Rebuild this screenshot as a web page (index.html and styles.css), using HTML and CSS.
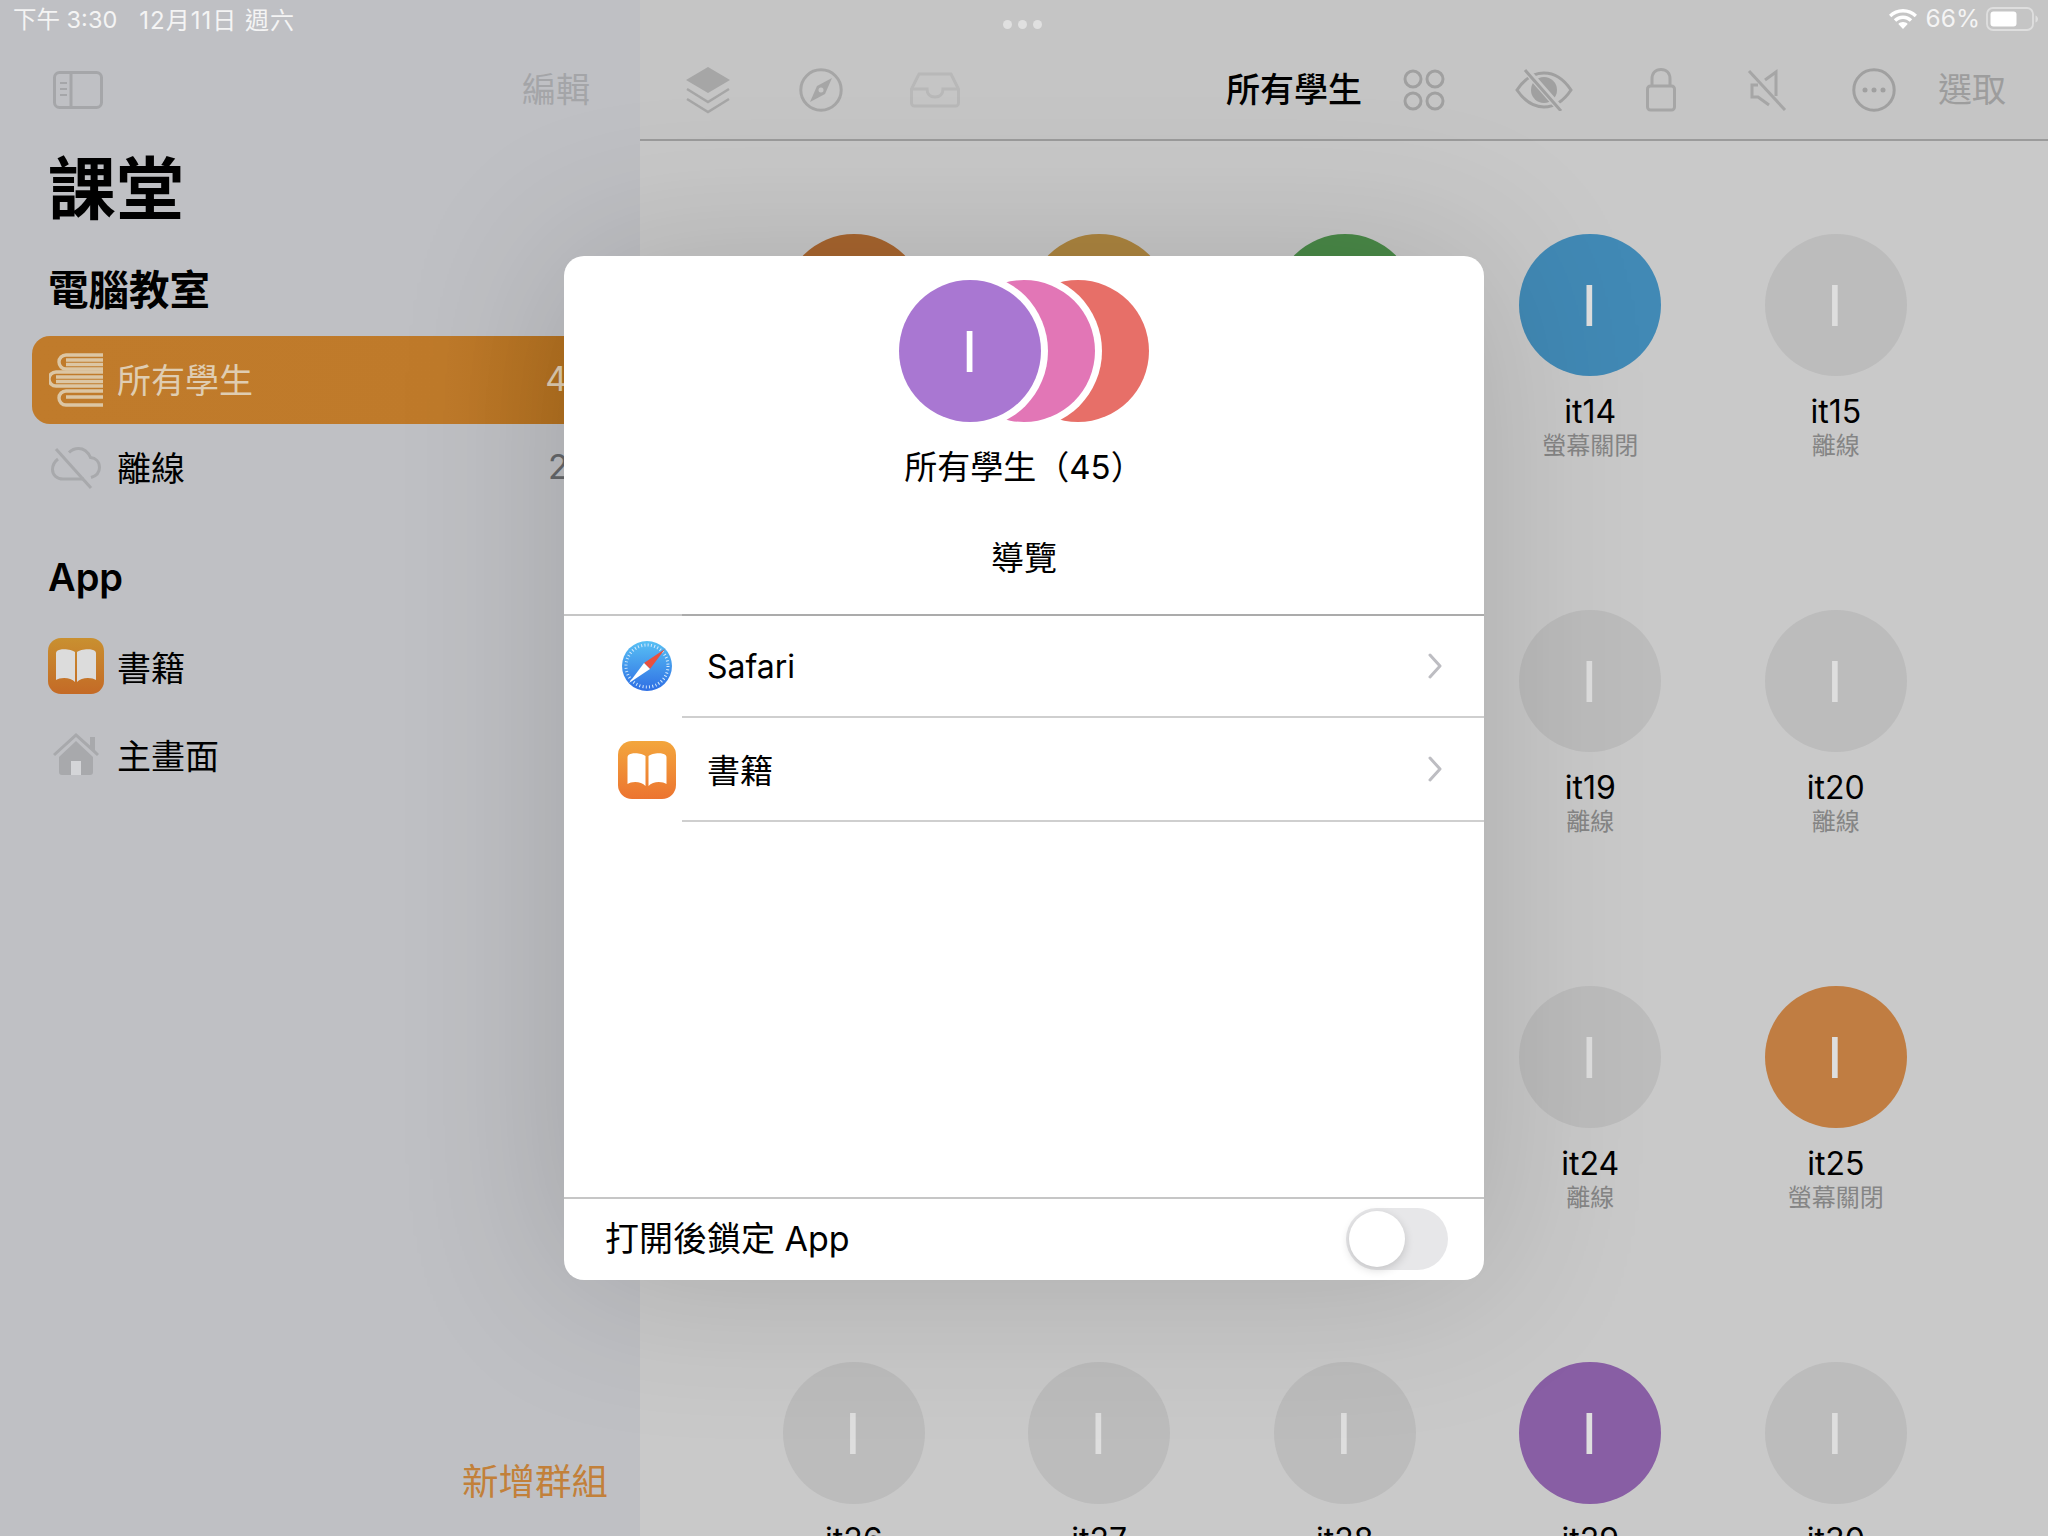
FILE: index.html
```html
<!DOCTYPE html>
<html lang="zh-Hant">
<head>
<meta charset="utf-8">
<title>課堂</title>
<link rel="stylesheet" href="styles.css">
</head>
<body>
<div class="app">
  <aside class="sidebar">
    <div class="side-bar-top">
      <svg class="ic-side" viewBox="0 0 50 38" width="50" height="38"><rect x="1.5" y="1.5" width="47" height="35" rx="5" fill="none" stroke="#a5a6a9" stroke-width="3"/><path d="M18 2v34" stroke="#a5a6a9" stroke-width="3"/><path d="M7 12h7M7 18h7M7 24h7" stroke="#a5a6a9" stroke-width="2"/></svg>
      <span class="side-edit">編輯</span>
    </div>
    <h1 class="side-title">課堂</h1>
    <h2 class="side-head">電腦教室</h2>
    <div class="side-row selected">
      <span class="row-icon">
        <svg viewBox="0 0 54 54" width="54" height="54" fill="none" stroke="#dcc6a4" stroke-width="3.4"><path d="M54 2H17a6 6 0 0 0 0 14h37M17 7h37M17 11.500h37"/><path d="M54 19H7a6 6 0 0 0 0 14h47M7 24h47M7 28.500h47" /><path d="M54 38H17a6.500 6.500 0 0 0 0 14h37M17 44h37"/></svg>
      </span>
      <span class="row-label raised">所有學生</span><span class="row-count raised">45</span>
    </div>
    <div class="side-row">
      <span class="row-icon">
        <svg viewBox="0 0 50 42" width="50" height="42" fill="none" stroke="#a8a9ac" stroke-width="3"><path d="M7 12C3 15 1.500 19 1.500 22.500 1.500 28 6 32 12 32h21M40 30.500c5-1.500 8.500-5 8.500-10 0-6-4-9.500-9-10C37 5 33 1.500 27.500 1.500c-4 0-7 1.500-9.500 4"/><path d="M5 2l35 39"/></svg>
      </span>
      <span class="row-label raised">離線</span><span class="row-count raised">27</span>
    </div>
    <h2 class="side-head app-head">App</h2>
    <div class="side-row">
      <span class="row-icon">
        <svg viewBox="0 0 56 56" width="56" height="56"><defs><linearGradient id="bk1" x1="0" y1="0" x2="0" y2="1"><stop offset="0" stop-color="#c99030"/><stop offset="1" stop-color="#c46a26"/></linearGradient></defs><rect width="56" height="56" rx="13" fill="url(#bk1)"/><path d="M27 14c-3-3-15-4-18-1-1 1-1 2-1 3v26c4-3 15-3 19 2zM29 14c3-3 15-4 18-1 1 1 1 2 1 3v26c-4-3-15-3-19 2z" fill="#dcdcdc"/></svg>
      </span>
      <span class="row-label">書籍</span>
    </div>
    <div class="side-row">
      <span class="row-icon">
        <svg viewBox="0 0 48 44" width="48" height="44"><path d="M1 22L24 1l14 12.500V5h5v13l4 4-2 2L24 5 3 24z" fill="#a8a9ac"/><path d="M7 25L24 9l17 16v15a3 3 0 0 1-3 3H10a3 3 0 0 1-3-3zM19 43h10V29H19z" fill="#a8a9ac" fill-rule="evenodd"/><rect x="19" y="29" width="10" height="14" fill="#d4d5d8"/></svg>
      </span>
      <span class="row-label">主畫面</span>
    </div>
    <div class="side-foot">新增群組</div>
  </aside>

  <main class="main">
    <header class="toolbar">
      <svg class="t-a" viewBox="0 0 44 47" width="44" height="47" fill="none" stroke="#a6a6a6" stroke-width="2.500"><path d="M22 0L44 13 22 26 0 13z" fill="#a6a6a6" stroke="none"/><path d="M1 22l21 13 21-13M1 32l21 13 21-13"/></svg>
      <svg class="t-b" viewBox="0 0 44 44" width="44" height="44"><circle cx="22" cy="22" r="20.200" fill="none" stroke="#a6a6a6" stroke-width="3"/><path d="M33 10L26 26 11 34l7-16z" fill="#a6a6a6"/><circle cx="22" cy="22" r="2.500" fill="#c6c6c6"/></svg>
      <svg class="t-c" viewBox="0 0 50 36" width="50" height="36" fill="none" stroke="#b8b8b8" stroke-width="3"><path d="M9 2h32l7.500 15v14a3 3 0 0 1-3 3h-41a3 3 0 0 1-3-3V17z"/><path d="M2 17h15c0 5 3 8 8 8s8-3 8-8h15"/></svg>
      <span class="tool-title">所有學生</span>
      <svg class="t-d" viewBox="0 0 42 42" width="42" height="42" fill="none" stroke="#a0a0a0" stroke-width="3"><circle cx="10" cy="10" r="8"/><circle cx="32" cy="10" r="8"/><circle cx="10" cy="32" r="8"/><circle cx="32" cy="32" r="8"/></svg>
      <svg class="t-e" viewBox="0 0 58 42" width="58" height="42" fill="none" stroke="#a0a0a0" stroke-width="3"><path d="M2 21C10 9 19 4 29 4s19 5 27 17C48 33 39 38 29 38S10 33 2 21z"/><circle cx="29" cy="21" r="13" fill="#a0a0a0" stroke="none"/><path d="M11 1l36 41" stroke="#c6c6c6" stroke-width="7"/><path d="M10 1l36 41"/></svg>
      <svg class="t-f" viewBox="0 0 30 44" width="30" height="44" fill="none" stroke="#a6a6a6" stroke-width="3"><rect x="1.500" y="18" width="27" height="24" rx="3"/><path d="M6 18V11C6 5 9.500 1.500 15 1.500S24 5 24 11v7"/></svg>
      <svg class="t-g" viewBox="0 0 40 42" width="40" height="42" fill="none" stroke="#a6a6a6" stroke-width="3"><path d="M2 2l36 39"/><path d="M29 27V3L18 11M11 16H5v12h6l11 8" /></svg>
      <svg class="t-h" viewBox="0 0 44 44" width="44" height="44"><circle cx="22" cy="22" r="20.200" fill="none" stroke="#a0a0a0" stroke-width="3"/><circle cx="13" cy="22" r="2.500" fill="#a0a0a0"/><circle cx="22" cy="22" r="2.500" fill="#a0a0a0"/><circle cx="31" cy="22" r="2.500" fill="#a0a0a0"/></svg>
      <span class="tool-select">選取</span>
    </header>
    <section class="grid">
      <div class="student"><div class="avatar c-rust">I</div><div class="name">it11</div><div class="status">離線</div></div>
      <div class="student"><div class="avatar c-gold">I</div><div class="name">it12</div><div class="status">離線</div></div>
      <div class="student"><div class="avatar c-green">I</div><div class="name">it13</div><div class="status">離線</div></div>
      <div class="student"><div class="avatar c-blue">I</div><div class="name">it14</div><div class="status">螢幕關閉</div></div>
      <div class="student"><div class="avatar c-grey">I</div><div class="name">it15</div><div class="status">離線</div></div>
      <div class="student"><div class="avatar c-grey">I</div><div class="name">it16</div><div class="status">離線</div></div>
      <div class="student"><div class="avatar c-grey">I</div><div class="name">it17</div><div class="status">離線</div></div>
      <div class="student"><div class="avatar c-grey">I</div><div class="name">it18</div><div class="status">離線</div></div>
      <div class="student"><div class="avatar c-grey">I</div><div class="name">it19</div><div class="status">離線</div></div>
      <div class="student"><div class="avatar c-grey">I</div><div class="name">it20</div><div class="status">離線</div></div>
      <div class="student"><div class="avatar c-grey">I</div><div class="name">it21</div><div class="status">離線</div></div>
      <div class="student"><div class="avatar c-grey">I</div><div class="name">it22</div><div class="status">離線</div></div>
      <div class="student"><div class="avatar c-grey">I</div><div class="name">it23</div><div class="status">離線</div></div>
      <div class="student"><div class="avatar c-grey">I</div><div class="name">it24</div><div class="status">離線</div></div>
      <div class="student"><div class="avatar c-orange">I</div><div class="name">it25</div><div class="status">螢幕關閉</div></div>
      <div class="student"><div class="avatar c-grey">I</div><div class="name">it26</div><div class="status">離線</div></div>
      <div class="student"><div class="avatar c-grey">I</div><div class="name">it27</div><div class="status">離線</div></div>
      <div class="student"><div class="avatar c-grey">I</div><div class="name">it28</div><div class="status">離線</div></div>
      <div class="student"><div class="avatar c-purple">I</div><div class="name">it29</div><div class="status">離線</div></div>
      <div class="student"><div class="avatar c-grey">I</div><div class="name">it30</div><div class="status">離線</div></div>
    </section>
  </main>

  <div class="statusbar">
    <span class="st-time">下午 3:30</span><span class="st-date">12月11日 週六</span>
    <span class="st-dots"><i></i><i></i><i></i></span>
    <svg class="st-wifi" viewBox="0 0 28 20" width="28" height="20"><path d="M14 0C8.500 0 3.700 2.200 0 5.700l2.300 2.500C5.300 5.300 9.400 3.500 14 3.500s8.700 1.800 11.700 4.700L28 5.700C24.300 2.200 19.500 0 14 0z" fill="#fff"/><path d="M14 6.500c-3.600 0-6.800 1.400-9.200 3.700l2.400 2.500c1.800-1.700 4.200-2.800 6.800-2.800s5 1.100 6.800 2.800l2.400-2.500C20.800 7.900 17.600 6.500 14 6.500z" fill="#fff"/><path d="M14 13c-1.900 0-3.500.7-4.700 1.900L14 20l4.700-5.100C17.500 13.700 15.900 13 14 13z" fill="#fff"/></svg>
    <span class="st-batt">66%</span>
    <svg class="st-cell" viewBox="0 0 52 24" width="52" height="24"><rect x="1" y="1" width="46" height="22" rx="6" fill="none" stroke="#dedede" stroke-width="1.800"/><rect x="4.500" y="4.500" width="26" height="15" rx="3" fill="#fff"/><path d="M49.500 8.500c1.500.5 2.500 2 2.500 3.500s-1 3-2.500 3.500z" fill="#dedede"/></svg>
  </div>

  <div class="modal">
    <div class="modal-head">
      <div class="stack">
        <div class="disc d-purple">I</div>
        <div class="disc d-pink"></div>
        <div class="disc d-red"></div>
      </div>
      <div class="modal-title">所有學生（45）</div>
      <div class="modal-sub">導覽</div>
    </div>
    <div class="app-list">
      <div class="app-row first">
        <span class="app-slot">
          <svg viewBox="0 0 50 50" width="50" height="50"><defs><linearGradient id="saf" x1="0" y1="0" x2="0" y2="1"><stop offset="0" stop-color="#58c0f4"/><stop offset="1" stop-color="#2f6fe4"/></linearGradient></defs><circle cx="25" cy="25" r="25" fill="url(#saf)"/><circle cx="25" cy="25" r="21" fill="none" stroke="#d5eafc" stroke-width="3" stroke-dasharray="1 2.300"/><path d="M43 8L28 28 22 22z" fill="#e8503f"/><path d="M7 42L22 22 28 28z" fill="#fff"/></svg>
        </span>
        <span class="app-body"><span class="app-name">Safari</span>
          <svg class="chev" viewBox="0 0 14 26" width="14" height="26" fill="none" stroke="#bdbdc2" stroke-width="3" stroke-linecap="round" stroke-linejoin="round"><path d="M2 2l10 11L2 24"/></svg>
        </span>
      </div>
      <div class="app-row second">
        <span class="app-slot">
          <svg viewBox="0 0 58 58" width="58" height="58"><defs><linearGradient id="bk2" x1="0" y1="0" x2="0" y2="1"><stop offset="0" stop-color="#f3a63c"/><stop offset="1" stop-color="#ec7430"/></linearGradient></defs><rect width="58" height="58" rx="14" fill="url(#bk2)"/><path d="M27.500 15c-3-3-14-4-17-1-1 1-1 2-1 3v26c4-3 14-3 18 2zM30.500 15c3-3 14-4 17-1 1 1 1 2 1 3v26c-4-3-14-3-18 2z" fill="#fff"/></svg>
        </span>
        <span class="app-body"><span class="app-name">書籍</span>
          <svg class="chev" viewBox="0 0 14 26" width="14" height="26" fill="none" stroke="#bdbdc2" stroke-width="3" stroke-linecap="round" stroke-linejoin="round"><path d="M2 2l10 11L2 24"/></svg>
        </span>
      </div>
    </div>
    <div class="modal-foot">
      <span class="foot-label">打開後鎖定 App</span>
      <span class="toggle"><span class="knob"></span></span>
    </div>
  </div>
</div>
</body>
</html>
```

FILE: styles.css
```css
* { box-sizing: border-box; }
html, body { margin: 0; padding: 0; }
body {
  width: 2048px;
  height: 1536px;
  overflow: hidden;
  font-family: Inter, "Noto Sans CJK TC", sans-serif;
  color: #000;
}
.app {
  position: relative;
  display: flex;
  width: 2048px;
  height: 1536px;
  overflow: hidden;
}

/* sidebar */
.sidebar {
  position: relative;
  display: flex;
  flex-direction: column;
  width: 640px;
  height: 1536px;
  background: #bfc0c4;
  flex: none;
}
.side-bar-top {
  display: flex;
  align-items: center;
  justify-content: space-between;
  height: 38px;
  margin-top: 71px;
  padding: 0 50px 0 53px;
}
.side-edit { font-size: 34px; line-height: 38px; color: #a4a5a8; }
.side-title {
  margin: 32px 0 0 48px;
  font-size: 68px;
  line-height: 96px;
  font-weight: 700;
}
.side-head {
  margin: 24px 0 0 48px;
  font-size: 40.500px;
  line-height: 60px;
  font-weight: 700;
}
.side-row {
  display: flex;
  align-items: center;
  flex: none;
  width: 576px;
  height: 88px;
  margin-left: 32px;
  padding-right: 20px;
  border-radius: 18px;
  font-size: 34px;
}
.side-head + .side-row { margin-top: 15px; }
.side-row.selected {
  background: linear-gradient(to right, #c07b2b 0%, #bf7a2a 72%, #b2701f 94%);
  color: #dfcdb2;
}
.row-icon {
  display: flex;
  align-items: center;
  justify-content: center;
  width: 56px;
  margin: 0 13px 0 16px;
}
.row-label { flex: 1; }
.raised { margin-bottom: 4px; }
.row-count { color: #66686b; }
.selected .row-count { color: #dfcdb2; }
.app-head { margin-top: 35px; font-size: 38px; font-weight: 600; }
.side-foot {
  position: absolute;
  right: 32px;
  bottom: 31px;
  font-size: 36.500px;
  line-height: 46px;
  color: #c2803a;
}

/* main */
.main {
  flex: 1;
  min-width: 0;
  background: #c9c9c9;
}
.toolbar {
  display: flex;
  align-items: center;
  height: 141px;
  padding: 41px 0 0 46px;
  background: #c5c5c5;
  border-bottom: 2px solid #9b9b9b;
}
.tool-title { margin: 0 0 5px 266px; font-size: 34px; font-weight: 500; }
.tool-select { margin: 0 0 5px 42px; font-size: 34px; color: #9d9d9d; }
.t-b { margin-left: 69px; }
.t-c { margin-left: 67px; }
.t-d { margin-left: 41px; }
.t-e { margin-left: 70px; }
.t-f { margin-left: 73px; }
.t-g { margin-left: 71px; }
.t-h { margin-left: 65px; }
.grid {
  display: grid;
  grid-template-columns: repeat(5, 245.500px);
  grid-auto-rows: 376px;
  padding: 93px 0 0 91px;
}
.student {
  display: flex;
  flex-direction: column;
  align-items: center;
}
.avatar {
  display: flex;
  align-items: center;
  justify-content: center;
  width: 142px;
  height: 142px;
  padding-right: 2px;
  border-radius: 50%;
  font-family: "Liberation Sans", sans-serif;
  font-size: 60px;
  color: #dedede;
}
.c-rust { background: #a9662f; }
.c-gold { background: #ae8640; }
.c-green { background: #4a8a48; }
.c-blue { background: #4189b5; }
.c-orange { background: #c07d42; }
.c-purple { background: #885ea4; }
.c-grey { background: #bcbcbc; }
.name { margin-top: 18px; font-size: 32px; line-height: 36px; }
.status { margin-top: -1px; font-size: 24px; line-height: 34px; color: #858585; }

/* status bar */
.statusbar {
  position: absolute;
  top: 0;
  left: 0;
  display: flex;
  align-items: center;
  width: 2048px;
  height: 38px;
  padding: 0 10px 0 13px;
  font-size: 23.500px;
  color: #f4f4f4;
}
.st-time, .st-date, .st-batt { margin-bottom: 2px; }
.st-date { margin-left: 22px; font-size: 24px; letter-spacing: 1px; }
.st-dots {
  position: absolute;
  top: 20px;
  left: 1003px;
  display: flex;
  gap: 6px;
}
.st-dots i {
  width: 9px;
  height: 9px;
  border-radius: 50%;
  background: #e0e0e0;
}
.st-wifi { margin-left: auto; }
.st-batt { margin: 0 6px 2px 9px; font-size: 24.500px; }

/* modal */
.modal {
  position: absolute;
  top: 256px;
  left: 564px;
  display: flex;
  flex-direction: column;
  width: 920px;
  height: 1024px;
  background: #fff;
  border-radius: 20px;
  box-shadow: 0 0 170px rgba(0, 0, 0, 0.16);
}
.modal-head {
  display: flex;
  flex-direction: column;
  align-items: center;
  height: 360px;
  padding-top: 24px;
  border-bottom: 2px solid #c6c6c6;
}
.stack { display: flex; margin-left: -1px; }
.disc {
  position: relative;
  display: flex;
  align-items: center;
  justify-content: center;
  width: 142px;
  height: 142px;
  border-radius: 50%;
  font-family: "Liberation Sans", sans-serif;
  font-size: 60px;
  color: #fff;
}
.disc + .disc { margin-left: -88px; }
.d-purple { z-index: 3; background: #a977d2; box-shadow: 0 0 0 7px #fff; }
.d-pink { z-index: 2; background: #e276b6; box-shadow: 0 0 0 7px #fff; }
.d-red { z-index: 1; background: #e76f68; }
.modal-title { margin-top: 23px; font-size: 33px; line-height: 44px; }
.modal-sub { margin-top: 47px; font-size: 33px; line-height: 44px; }
.app-list { flex: 1; }
.app-row { display: flex; align-items: stretch; }
.app-row.first { height: 104px; margin-top: -2px; }
.app-row.second { height: 104px; }
.app-slot {
  display: flex;
  align-items: center;
  justify-content: center;
  width: 118px;
  padding-left: 48px;
  flex: none;
}
.app-body {
  display: flex;
  align-items: center;
  justify-content: space-between;
  flex: 1;
  padding: 0 42px 0 25px;
  border-bottom: 2px solid #cfcfcf;
  font-size: 33px;
}
.first .app-name { font-size: 32px; }
.first .app-body { border-top: 2px solid #ababab; }
.modal-foot {
  display: flex;
  align-items: center;
  justify-content: space-between;
  height: 83px;
  padding: 0 36px 2px 41px;
  border-top: 2px solid #c6c6c6;
  font-size: 34px;
}
.foot-label { margin-bottom: 4px; }
.toggle {
  display: block;
  width: 102px;
  height: 62px;
  padding: 3px;
  border-radius: 31px;
  background: #e7e7e9;
}
.knob {
  display: block;
  width: 56px;
  height: 56px;
  border-radius: 50%;
  background: #fff;
  box-shadow: 0 3px 10px rgba(0, 0, 0, 0.16);
}
```
